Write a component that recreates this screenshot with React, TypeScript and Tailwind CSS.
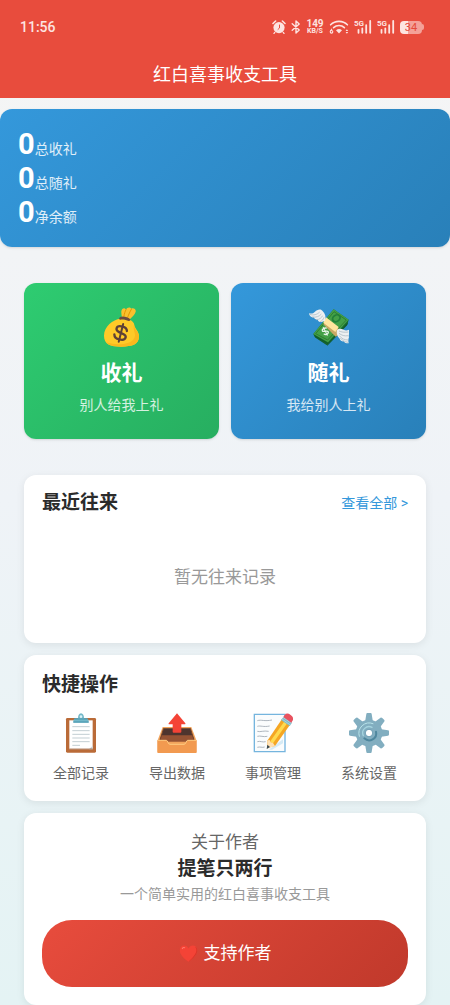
import type { ReactNode } from "react";

function AlarmIcon() {
    return (
        <svg viewBox="0 0 14 14" className="h-3.5 w-3.5" aria-hidden="true">
            <path d="M1 3.5 3.6 1M13 3.5 10.4 1" stroke="currentColor" strokeWidth="1.6" strokeLinecap="round" />
            <circle cx="7" cy="7.6" r="5.6" fill="currentColor" />
            <path d="M2.8 12.4l-.8 1M11.2 12.4l.8 1" stroke="currentColor" strokeWidth="1.3" strokeLinecap="round" />
            <path d="M7.5 5V8L6 9.4" stroke="#e84c3d" strokeWidth="1" fill="none" strokeLinecap="round" />
        </svg>
    );
}

function BluetoothIcon() {
    return (
        <svg viewBox="0 0 10 14" className="h-3.5 w-2.5" aria-hidden="true">
            <path
                d="M1.2 3.8l7 6.2L5 13V1l3.2 3-7 6.2"
                fill="none"
                stroke="currentColor"
                strokeWidth="1.4"
                strokeLinejoin="round"
                strokeLinecap="round"
            />
        </svg>
    );
}

function WifiIcon() {
    return (
        <svg viewBox="0 0 20 14" className="h-3.5 w-5" aria-hidden="true">
            <g fill="none" stroke="currentColor" strokeWidth="1.6" strokeLinecap="round">
                <path d="M1.6 4.8a12 12 0 0 1 16.8 0" />
                <path d="M4.6 7.6a7.8 7.8 0 0 1 10.8 0" />
            </g>
            <path d="M7 10.2a4.6 4.6 0 0 1 6 0l-3 3.2z" fill="currentColor" />
            <path d="M3 8.8 1.4 11" fill="none" stroke="currentColor" strokeWidth="1.1" />
            <circle cx="2.5" cy="11.8" r="1.3" fill="none" stroke="currentColor" strokeWidth="1.1" />
            <path d="M16.6 11l1.3-1.8 1.3 1.8zM16.6 12l1.3 1.8 1.3-1.8z" fill="currentColor" />
        </svg>
    );
}

function SignalIcon() {
    return (
        <svg viewBox="0 0 18 14" className="h-3.5 w-[18px]" aria-hidden="true">
            <text x="0" y="6" fontSize="8" fontWeight="700" fill="currentColor">
                5G
            </text>
            <path
                d="M4.5 9.8v3M8.3 8.4v4.4M12.2 5.2v7.6M16.2 1v11.8"
                stroke="currentColor"
                strokeWidth="1.8"
                strokeLinecap="round"
            />
        </svg>
    );
}

function Battery() {
    return (
        <div className="flex items-center">
            <div className="flex h-[13px] w-[22px] items-center justify-center rounded bg-linear-to-r from-[#fde4e1] from-36% to-[#f4a198] to-36% text-[11px] leading-none text-[#e5493a]">
                34
            </div>
            <div className="h-1.5 w-0.5 rounded-r bg-[#f4a198]" />
        </div>
    );
}

function Emoji({ size = "h-10 w-10", children }: { size?: string; children: ReactNode }) {
    return (
        <svg viewBox="0 0 120 120" className={size} aria-hidden="true">
            {children}
        </svg>
    );
}

function MoneyBag() {
    return (
        <Emoji>
            <path d="M60 32C58 20 56 12 61 6c5-4 9-1 11 2 3-7 12-9 16-3 7-4 15 3 13 9-2 8-10 15-20 25z" fill="#fbc02d" />
            <path d="M66 27c1-8 3-13 6-19M77 31c4-10 6-16 11-24" stroke="#e59600" strokeWidth="3" fill="none" strokeLinecap="round" />
            <path d="M55 35C33 38 6 57 6 86c0 25 18 33 51 33 35 0 54-7 54-31 0-15-12-22-14-34-1-7-6-12-13-15z" fill="#ffca28" />
            <path d="M96 53c0 14 15 20 15 35 0 24-19 31-54 31-22 0-37-4-45-13 41 12 84 5 87-20 1-11-7-18-3-33z" fill="#fbb81d" />
            <path d="M55 30c8-4 23 0 29 6 2 3 0 7-4 6-8-4-17-6-25-4-5 1-5-6 0-8z" fill="#6d4c41" />
            <g transform="rotate(14 57 77)" stroke="#5d4037" fill="none" strokeLinecap="round">
                <path d="M57 50v55" strokeWidth="6" />
                <path d="M73 68c-2-9-10-10-16-10-9 0-16 4-16 10 0 15 33 5 33 19 0 8-8 11-17 11-8 0-16-3-18-11" strokeWidth="7" />
            </g>
        </Emoji>
    );
}

function WingedMoney() {
    return (
        <Emoji>
            <path d="M13 81 74 7l45 31-4 15-60 62-38-25z" fill="#17692d" />
            <path d="M13 81 74 7l45 31-62 68z" fill="#43a047" />
            <path d="m20 80 55-66 37 25-56 60z" fill="none" stroke="#2e7d32" strokeWidth="3" />
            <ellipse cx="82" cy="34" rx="15" ry="12" fill="#238039" transform="rotate(-35 82 34)" />
            <ellipse cx="82" cy="34" rx="9" ry="7" fill="#43a047" transform="rotate(-35 82 34)" />
            <path d="m18 90 38 25 59-62M17 86l40 24 60-62" fill="none" stroke="#0b4f25" strokeWidth="1.5" />
            <path d="m51 35 37 28-2 22-6 4-37-37z" fill="#c9a866" />
            <path d="m51 31 38 29-10 15-36-28z" fill="#ffe59d" />
            <g transform="rotate(-28 49 73)" fill="none" stroke="#e8f5e9" strokeLinecap="round">
                <path d="M56 66c-4-4-13-4-14 1-1 7 15 4 14 12-1 5-11 5-14 0" strokeWidth="4" />
                <path d="M49 60v26" strokeWidth="3" />
            </g>
            <path
                d="M0 19c8 2 13 0 18-5C24 8 34 4 40 11c9 8 12 19 8 31l-11 3c-6 0-10-3-11-7-6 0-10-2-12-7-7 1-13-3-14-12z"
                fill="#eceff1"
            />
            <path d="M2 22c12 4 22 1 30-7M9 30c13 2 22-2 28-9M21 38c10 0 16-5 20-12M33 44c6-2 10-7 12-13" fill="none" stroke="#b0bec5" strokeWidth="2.5" />
            <path d="M84 69c5-5 12-5 20-1 5 3 9 3 17 0 1 11-3 16-1 23-2 5-3 8-1 18-8 0-12-1-15-6-8 1-10-3-13-9-7-6-9-16-7-25z" fill="#eceff1" />
            <path d="M90 72c7 3 16 5 28 3M90 79c8 6 16 9 28 7M91 86c7 9 15 13 27 13M94 94c5 5 14 11 23 12" fill="none" stroke="#b0bec5" strokeWidth="2.5" />
        </Emoji>
    );
}

function Clipboard() {
    return (
        <Emoji>
            <rect x="15" y="15" width="90" height="104" rx="4" fill="#ba6b38" />
            <path d="M25 22h70v87H25z" fill="#fff" />
            <path d="M84 109h11V98z" fill="#cbd5da" />
            <path d="M25 108h70" stroke="#8d4b24" strokeWidth="2" />
            <path d="M34 41h52M34 53h52M34 64h52M34 75h52M34 86h52M34 97h23" stroke="#b6c4ca" strokeWidth="2.5" />
            <path d="M37 29c-1-8 2-13 8-13h6c0-8 3-15 9-15s9 7 9 15h6c6 0 9 5 8 13z" fill="#73b8c9" />
            <path d="M40 18h40M37 27h46" stroke="#4795ad" strokeWidth="3" />
            <circle cx="60" cy="11" r="4" fill="#d9f2f8" />
        </Emoji>
    );
}

function OutboxTray() {
    return (
        <Emoji>
            <path d="M17 42h86l15 40v36H2V82z" fill="#f2a45c" />
            <path d="M20 46h80l11 36H9z" fill="#4e342e" />
            <path d="M14 67h92l7 19H7z" fill="#965334" />
            <path d="M9 80 20 46M111 80 100 46" stroke="#744229" strokeWidth="3" />
            <path d="M1 82h27c5 0 4 12 11 12h42c7 0 6-12 11-12h27v36c0 1-1 2-2 2H3c-1 0-2-1-2-2z" fill="#f29a50" />
            <path d="M2 82h26c5 0 4 12 11 12h42c7 0 6-12 11-12h26" fill="none" stroke="#ffcc80" strokeWidth="3" />
            <path d="M60 1 85 31c1 2 0 3-2 3H73v22c0 2-1 3-3 3H50c-2 0-3-1-3-3V34H37c-2 0-3-1-2-3z" fill="#f44336" />
        </Emoji>
    );
}

function Memo() {
    return (
        <Emoji>
            <path d="M4 4h92v112H4z" fill="#fafcfd" stroke="#75b5de" strokeWidth="4" />
            <path
                d="M13 23c12-4 21 3 44-2M13 40c10-3 18 3 37-1M13 55c10 3 18-3 34 0M13 70c10-3 17 3 30 0M13 86c9-3 15 3 25 0M13 103c8-3 14 2 22-1"
                fill="none"
                stroke="#9fa8b2"
                strokeWidth="2.5"
            />
            <path d="m47 110 43-31v12l-33 19z" fill="#d5eaf5" />
            <path d="M42 105 44 82 87 18l24 17-45 64z" fill="#f5a623" />
            <path d="m52 85 43-61 8 6-44 62z" fill="#ffda4f" />
            <path d="m44 82 6-1 3 7 7 2 6 9-24 8z" fill="#ffe0b2" />
            <path d="m43 95 8 7-10 6z" fill="#37474f" />
            <path d="m84 21 8-10 25 18-7 10z" fill="#81b9c7" />
            <path d="m87 18 25 18M90 13l25 18" stroke="#c0e3e9" strokeWidth="2" />
            <path d="m91 12 4-6c5-6 11-5 18 0 7 5 10 11 5 18l-3 5z" fill="#e85360" />
        </Emoji>
    );
}

const GEAR_TEETH = [0, 45, 90, 135, 180, 225, 270, 315];

function Gear() {
    return (
        <Emoji>
            {GEAR_TEETH.map((angle) => (
                <path
                    key={angle}
                    d="M48 28 52 3c0-2 2-3 4-3h8c2 0 4 1 4 3l4 25z"
                    fill="#82aec0"
                    transform={`rotate(${angle} 60 60)`}
                />
            ))}
            <path fillRule="evenodd" d="M60 20a40 40 0 1 0 0 80 40 40 0 0 0 0-80zm0 30a10 10 0 1 1 0 20 10 10 0 0 1 0-20z" fill="#82aec0" />
            <path d="M31 70a31 31 0 0 1 41-38" fill="none" stroke="#b9e4ea" strokeWidth="3" strokeLinecap="round" />
            <path d="M46 76a21 21 0 0 0 35-20" fill="none" stroke="#4f879e" strokeWidth="6" strokeLinecap="round" />
            <path d="M43 68a19 19 0 0 1 26-25" fill="none" stroke="#a5d3de" strokeWidth="4" strokeLinecap="round" />
            <circle cx="60" cy="60" r="11" fill="none" stroke="#6999af" strokeWidth="2" />
        </Emoji>
    );
}

function Heart() {
    return (
        <Emoji size="h-[19px] w-[19px]">
            <path d="M60 112C35 95 5 71 5 38 5 20 17 9 32 9c13 0 22 7 28 19C66 16 75 9 88 9c15 0 27 11 27 29 0 33-30 57-55 74z" fill="#f44336" />
            <path d="M102 17c24 29-11 67-42 95 25-17 55-41 55-74 0-9-5-17-13-21z" fill="#d73529" />
            <path d="M21 29c3-6 10-8 15-6" stroke="#ff796d" strokeWidth="7" fill="none" strokeLinecap="round" />
        </Emoji>
    );
}

const stats = ["总收礼", "总随礼", "净余额"];

const quickActions = [
    { label: "全部记录", icon: <Clipboard /> },
    { label: "导出数据", icon: <OutboxTray /> },
    { label: "事项管理", icon: <Memo /> },
    { label: "系统设置", icon: <Gear /> },
];

export default function App() {
    return (
        <div className="min-h-screen bg-linear-to-b from-[#f5f5f5] via-[#eff3f7] to-[#e4f3f4] font-[Roboto,'Noto_Sans_CJK_SC',sans-serif] text-[#2b2b2b]">
            <header className="bg-[#e84c3d] text-white">
                <div className="flex h-[54px] items-center justify-between pr-[26px] pl-5 text-[#fde4e1]">
                    <span className="text-sm font-medium">11:56</span>
                    <div className="flex items-center gap-[5px]">
                        <AlarmIcon />
                        <BluetoothIcon />
                        <div className="flex w-[18px] flex-col items-center text-center font-bold">
                            <span className="text-[10px] leading-2">149</span>
                            <span className="text-[7px] leading-[7px]">KB/S</span>
                        </div>
                        <WifiIcon />
                        <SignalIcon />
                        <SignalIcon />
                        <Battery />
                    </div>
                </div>
                <h1 className="flex h-11 items-center justify-center pb-0.5 text-lg leading-6">
                    红白喜事收支工具
                </h1>
            </header>

            <section className="mt-[11px] rounded-xl bg-linear-135 from-[#3498db] to-[#2980b9] p-[18px] text-white shadow-sm">
                {stats.map((label) => (
                    <div key={label} className="flex h-[34px] items-baseline">
                        <span className="text-[29px] leading-[34px] font-bold">0</span>
                        <span className="text-sm leading-5 text-white/85">{label}</span>
                    </div>
                ))}
            </section>

            <main className="px-6 pt-9">
                <div className="grid grid-cols-2 gap-3">
                    <button
                        type="button"
                        className="flex h-[156px] flex-col items-center rounded-xl bg-linear-135 from-[#2ecc71] to-[#27ae60] pt-6 text-white shadow-sm"
                    >
                        <MoneyBag />
                        <span className="mt-3 text-[21px] leading-7 font-bold">收礼</span>
                        <span className="mt-2 text-sm leading-5 text-white/80">别人给我上礼</span>
                    </button>
                    <button
                        type="button"
                        className="flex h-[156px] flex-col items-center rounded-xl bg-linear-135 from-[#3498db] to-[#2980b9] pt-6 text-white shadow-sm"
                    >
                        <WingedMoney />
                        <span className="mt-3 text-[21px] leading-7 font-bold">随礼</span>
                        <span className="mt-2 text-sm leading-5 text-white/80">我给别人上礼</span>
                    </button>
                </div>

                <section className="mt-9 rounded-xl bg-white px-[18px] pt-4 pb-[18px] shadow-[0_2px_8px_rgba(0,0,0,0.08)]">
                    <div className="flex items-center justify-between">
                        <h2 className="text-[19px] leading-6 font-bold">最近往来</h2>
                        <a href="#records" className="text-sm leading-5 text-[#3498db]">
                            查看全部 &gt;
                        </a>
                    </div>
                    <p className="pt-[50px] pb-9 text-center text-[17px] leading-6 text-[#999999]">
                        暂无往来记录
                    </p>
                </section>

                <section className="mt-3 rounded-xl bg-white p-[18px] shadow-[0_2px_8px_rgba(0,0,0,0.08)]">
                    <h2 className="text-[19px] leading-6 font-bold">快捷操作</h2>
                    <div className="mt-4 grid grid-cols-4 gap-[18px]">
                        {quickActions.map(({ label, icon }) => (
                            <button key={label} type="button" className="flex flex-col items-center">
                                {icon}
                                <span className="mt-2.5 text-sm leading-5 text-[#666666]">{label}</span>
                            </button>
                        ))}
                    </div>
                </section>

                <section className="mt-3 rounded-xl bg-white p-[18px] text-center shadow-[0_2px_8px_rgba(0,0,0,0.08)]">
                    <p className="text-[17px] leading-[22px] text-[#666666]">关于作者</p>
                    <h2 className="mt-1 text-[19px] leading-6 font-bold">提笔只两行</h2>
                    <p className="mt-0.5 text-sm leading-[22px] text-[#999999]">
                        一个简单实用的红白喜事收支工具
                    </p>
                    <button
                        type="button"
                        className="mt-[15px] flex h-[67px] w-full items-center justify-center gap-1.5 rounded-[30px] bg-linear-135 from-[#e84c3d] to-[#c0392b] text-[17px] text-white"
                    >
                        <Heart />
                        支持作者
                    </button>
                </section>
            </main>
        </div>
    );
}
